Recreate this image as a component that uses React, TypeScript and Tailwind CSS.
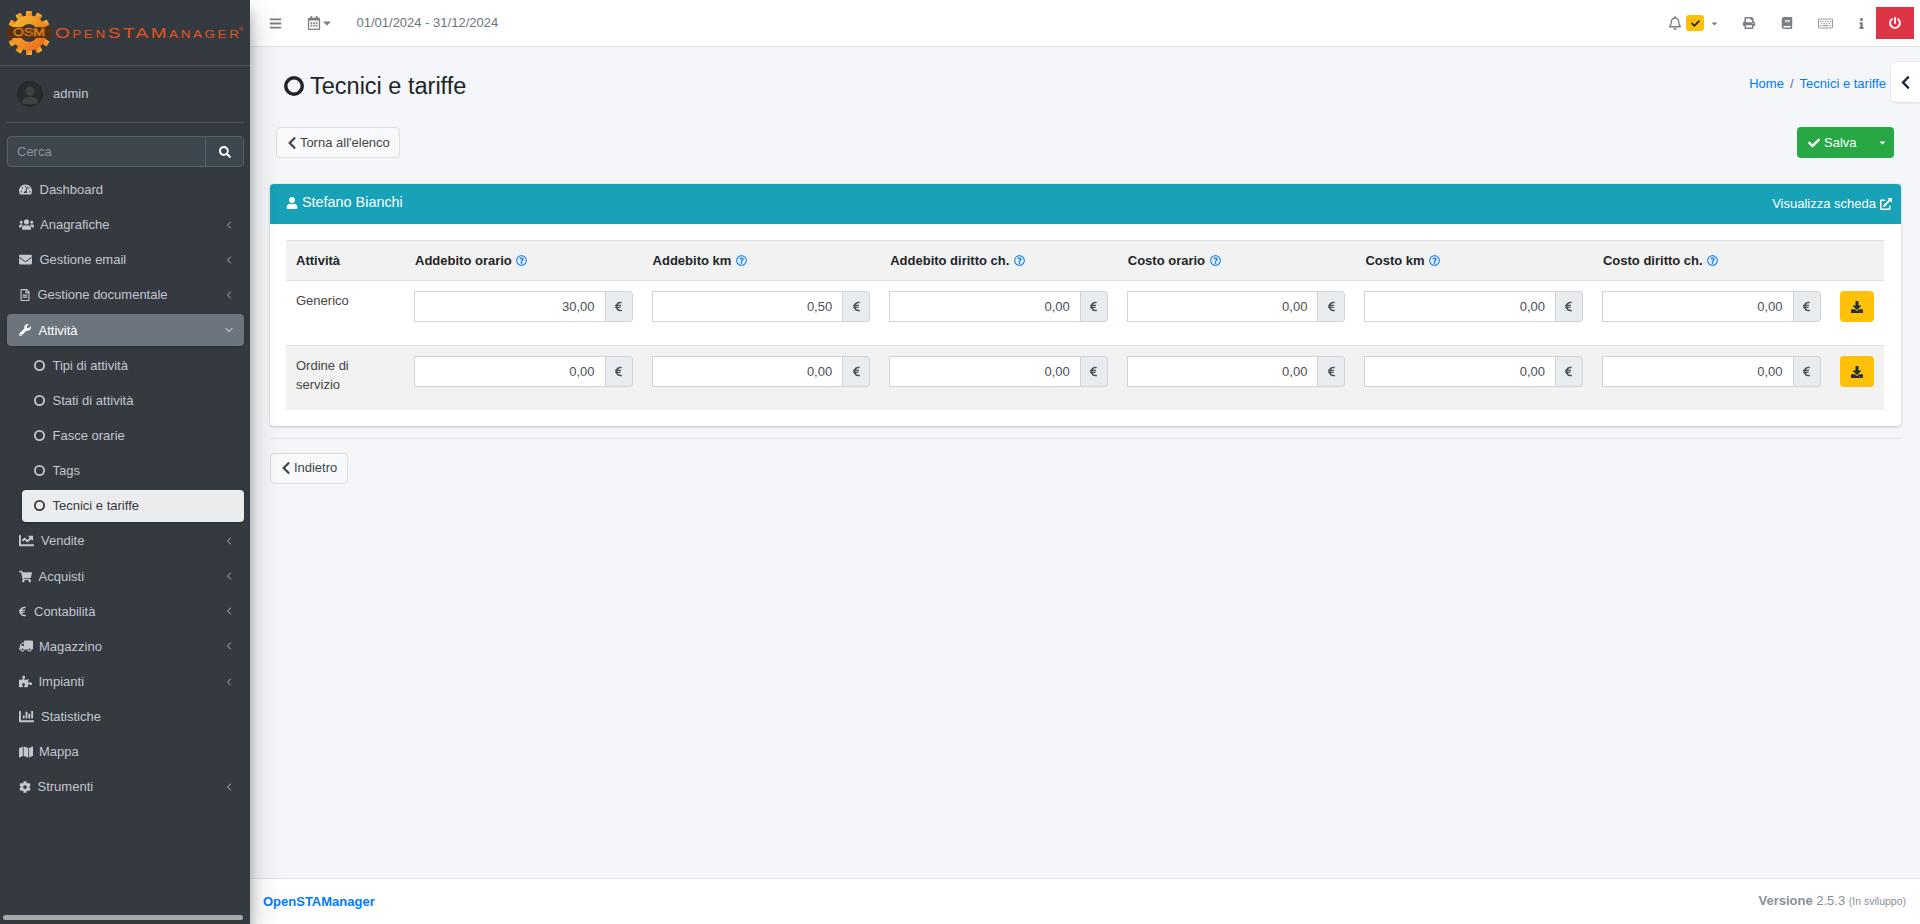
import React from "react";
import { ChevronLeft, ChevronDown } from "lucide-react";
import {
  FaTachometerAlt, FaUsers, FaEnvelope, FaRegFileAlt, FaWrench, FaChartLine, FaShoppingCart, FaEuroSign,
  FaTruck, FaPuzzlePiece, FaChartBar, FaMap, FaCog, FaSearch, FaBars,
  FaRegCalendarAlt, FaCaretDown, FaRegBell, FaCheck, FaPrint, FaBook, FaRegKeyboard, FaInfo, FaPowerOff,
  FaChevronLeft, FaUser, FaExternalLinkAlt, FaRegQuestionCircle, FaDownload,
} from "react-icons/fa";

const CircleO = ({ size, stroke }: { size: number; stroke: number }) => (
  <svg width={size} height={size} viewBox="0 0 24 24" fill="none" className="shrink-0">
    <circle cx="12" cy="12" r={12 - stroke / 2} stroke="currentColor" strokeWidth={stroke} />
  </svg>
);

const Logo = () => {
  const teeth = Array.from({ length: 12 }, (_, i) => i * 30);
  return (
    <div className="h-[66px] flex items-start border-b border-[#4b545c] relative">
      <svg width="46" height="46" viewBox="0 0 46 46" className="absolute left-[6px] top-[10px]">
        <defs>
          <linearGradient id="gear" x1="0" y1="0" x2="1" y2="1">
            <stop offset="0" stopColor="#f9c22e" />
            <stop offset="1" stopColor="#e8601c" />
          </linearGradient>
        </defs>
        <g fill="url(#gear)" transform="translate(23 23)">
          {teeth.map((a) => (
            <rect key={a} x="-3" y="-22" width="6" height="8" rx="1" transform={`rotate(${a})`} />
          ))}
          <path fillRule="evenodd" d="M0-17.5a17.5 17.5 0 1 0 0 35a17.5 17.5 0 1 0 0-35zM0-9a9 9 0 1 1 0 18a9 9 0 1 1 0-18z" />
        </g>
        <rect x="1" y="17" width="44" height="11" fill="#5b2e0e" />
        <text x="7" y="26.4" textLength="32" lengthAdjust="spacingAndGlyphs" fontFamily="Liberation Sans" fontSize="11" fill="none" stroke="#f39a26" strokeWidth="0.5">OSM</text>
      </svg>
      <span className="absolute left-[55px] top-[24px] text-[14px] leading-[18px] tracking-[1.9px] text-[#e4521f] whitespace-nowrap origin-left scale-x-[1.35] [font-variant:small-caps]">OpenSTAManager</span>
      <span className="absolute left-[239px] top-[25px] text-[6px] leading-[8px] text-[#e4521f]">®</span>
    </div>
  );
};

type Item = { label: string; icon: React.ReactNode; w: string; arrow?: boolean };

const menuTop: Item[] = [
  { label: "Dashboard", icon: <FaTachometerAlt size={13} />, w: "w-[20.5px]" },
  { label: "Anagrafiche", icon: <FaUsers size={15} />, w: "w-[21px]", arrow: true },
  { label: "Gestione email", icon: <FaEnvelope size={13} />, w: "w-[20.5px]", arrow: true },
  { label: "Gestione documentale", icon: <FaRegFileAlt size={12} />, w: "w-[18.5px]", arrow: true },
];

const menuSub = ["Tipi di attività", "Stati di attività", "Fasce orarie", "Tags"];

const menuBottom: Item[] = [
  { label: "Vendite", icon: <FaChartLine size={15} />, w: "w-[22px]", arrow: true },
  { label: "Acquisti", icon: <FaShoppingCart size={13} />, w: "w-[19.5px]", arrow: true },
  { label: "Contabilità", icon: <FaEuroSign size={11} className="-ml-[2px]" />, w: "w-[15px]", arrow: true },
  { label: "Magazzino", icon: <FaTruck size={14} className="-scale-x-100" />, w: "w-[20px]", arrow: true },
  { label: "Impianti", icon: <FaPuzzlePiece size={13} />, w: "w-[19.5px]", arrow: true },
  { label: "Statistiche", icon: <FaChartBar size={15} />, w: "w-[22px]" },
  { label: "Mappa", icon: <FaMap size={14} />, w: "w-[20px]" },
  { label: "Strumenti", icon: <FaCog size={12} />, w: "w-[18.5px]", arrow: true },
];

const NavRow = ({ item }: { item: Item }) => (
  <a className="h-[32.15px] mb-[3px] pl-[12px] pr-[9px] flex items-center text-[#c2c7d0]">
    <span className={`${item.w} shrink-0 flex items-center`}>{item.icon}</span>
    <span className="flex-1">{item.label}</span>
    {item.arrow && <ChevronLeft size={12} strokeWidth={1.75} />}
  </a>
);

const Sidebar = () => (
  <aside className="w-[250px] shrink-0 bg-[#343a40] relative z-20 shadow-[0_14px_28px_rgba(0,0,0,0.25),0_10px_10px_rgba(0,0,0,0.22)] flex flex-col">
    <Logo />
    <div className="ml-[7px] mr-[6px] h-[56.5px] border-b border-[#4f5962] flex items-center pl-[10px]">
      <span className="w-[26px] h-[26px] rounded-full bg-[#272b30] border border-[#22262a] overflow-hidden relative shrink-0">
        <svg viewBox="0 0 26 26" className="w-full h-full">
          <circle cx="13" cy="10" r="5" fill="#3b4147" />
          <path d="M4 24c0-6 4-8 9-8s9 2 9 8z" fill="#3b4147" />
        </svg>
      </span>
      <span className="ml-[10px] text-[#c2c7d0]">admin</span>
    </div>
    <div className="ml-[7px] mr-[6px] mt-[13.5px] h-[31px] flex rounded-[4px] border border-[#56606a] bg-[#3f474e]">
      <span className="flex-1 pl-[9px] flex items-center text-[#8d949b]">Cerca</span>
      <span className="w-[38px] border-l border-[#56606a] flex items-center justify-center text-white">
        <FaSearch size={12} />
      </span>
    </div>
    <nav className="mt-[6.5px] pl-[7px] pr-[6px]">
      {menuTop.map((m) => <NavRow key={m.label} item={m} />)}
      <a className="h-[32.15px] mb-[3px] pl-[12px] pr-[9px] flex items-center rounded-[4px] bg-[#6c757d] text-white shadow-[0_1px_3px_rgba(0,0,0,0.2)]">
        <span className="w-[19.5px] shrink-0 flex items-center"><FaWrench size={12} /></span>
        <span className="flex-1">Attività</span>
        <ChevronDown size={12} strokeWidth={1.75} />
      </a>
      <div className="pl-[15px]">
        {menuSub.map((s) => (
          <a key={s} className="h-[32.15px] mb-[3px] pl-[12px] flex items-center gap-[7.5px] text-[#c2c7d0]">
            <CircleO size={11} stroke={4} />
            {s}
          </a>
        ))}
        <a className="h-[32.15px] mb-[3px] pl-[12px] flex items-center gap-[7.5px] rounded-[4px] bg-[#ebeced] text-[#343a40] shadow-[0_1px_3px_rgba(0,0,0,0.2)]">
          <CircleO size={11} stroke={4} />
          Tecnici e tariffe
        </a>
      </div>
      {menuBottom.map((m) => <NavRow key={m.label} item={m} />)}
    </nav>
    <div className="absolute left-[3px] bottom-[4px] w-[240px] h-[5px] rounded-full bg-[#a8a8a8]" />
  </aside>
);

const Navbar = () => (
  <header className="h-[47px] shrink-0 bg-white border-b border-[#dee2e6] flex items-center text-[#7a7f84]">
    <FaBars size={13} className="ml-[19px]" />
    <FaRegCalendarAlt size={14} className="ml-[24.5px]" />
    <FaCaretDown size={12} className="ml-[0.5px]" />
    <span className="ml-[23.5px] text-[#6c757d]">01/01/2024 - 31/12/2024</span>
    <div className="ml-auto flex items-center pr-[6px]">
      <FaRegBell size={14} />
      <span className="ml-[4px] w-[18px] h-[16px] rounded-[3px] bg-[#ffc107] flex items-center justify-center text-[#1f2d3d]">
        <FaCheck size={9} />
      </span>
      <FaCaretDown size={9} className="ml-[6px]" />
      <FaPrint size={12} className="ml-[23.5px]" />
      <FaBook size={12} className="ml-[26px]" />
      <FaRegKeyboard size={15} className="ml-[25px] text-[#9a9ea3]" />
      <FaInfo size={11} className="ml-[23px]" />
      <span className="ml-[9.5px] w-[38px] h-[32px] bg-[#dc3545] text-white flex items-center justify-center">
        <FaPowerOff size={12} />
      </span>
    </div>
  </header>
);

const costs = ["Addebito orario", "Addebito km", "Addebito diritto ch.", "Costo orario", "Costo km", "Costo diritto ch."];
const rows = [
  { name: "Generico", values: ["30,00", "0,50", "0,00", "0,00", "0,00", "0,00"], bg: "bg-white" },
  { name: "Ordine di servizio", values: ["0,00", "0,00", "0,00", "0,00", "0,00", "0,00"], bg: "bg-[#f2f2f2]" },
];

const MoneyInput = ({ value }: { value: string }) => (
  <div className="flex h-[31px] mb-[23px] mr-[-1px]">
    <div className="flex-1 bg-white border border-[#ced4da] text-right pr-[10px] leading-[29px] text-[#495057]">{value}</div>
    <div className="w-[27px] bg-[#e9ecef] border border-l-0 border-[#ced4da] rounded-r-[4px] flex items-center justify-center text-[#495057]">
      <FaEuroSign size={11} />
    </div>
  </div>
);

const RatesTable = () => (
  <table className="w-full table-fixed border-collapse">
    <thead>
      <tr className="bg-[#f2f2f2] border-y border-[#dee2e6] h-[40px]">
        <th className="w-[118px] px-[10px] text-left font-bold text-[#212529]">Attività</th>
        {costs.map((c) => (
          <th key={c} className="w-[237.6px] px-[11px] text-left font-bold text-[#212529]">
            {c} <FaRegQuestionCircle size={11} className="inline text-[#007bff] ml-[1px] mb-[1px]" />
          </th>
        ))}
        <th />
      </tr>
    </thead>
    <tbody>
      {rows.map((r, i) => (
        <tr key={r.name} className={`${r.bg} ${i > 0 ? "border-t border-[#dee2e6]" : ""}`}>
          <td className="px-[10px] pt-[10px] align-top text-[#444]">{r.name}</td>
          {r.values.map((v, j) => (
            <td key={j} className="px-[10px] pt-[10px] align-top">
              <MoneyInput value={v} />
            </td>
          ))}
          <td className="pl-[10px] pt-[10px] align-top">
            <span className="w-[34px] h-[31px] rounded-[4px] bg-[#ffc107] text-[#1f2d3d] flex items-center justify-center">
              <FaDownload size={12} />
            </span>
          </td>
        </tr>
      ))}
    </tbody>
  </table>
);

const BackButton = ({ label, className }: { label: string; className: string }) => (
  <button className={`h-[31px] pl-[8.4px] pr-[6px] flex items-center gap-[0.5px] whitespace-nowrap bg-[#f8f9fa] border border-[#ddd] rounded-[4px] text-[#444] ${className}`}>
    <FaChevronLeft size={14} />
    {label}
  </button>
);

export default function App() {
  return (
    <div className="flex h-screen w-screen overflow-hidden text-[13px] leading-[19.2px] font-['Liberation_Sans',Arial,sans-serif] text-[#212529]">
      <Sidebar />
      <div className="flex-1 min-w-0 flex flex-col">
        <Navbar />
        <main className="flex-1 bg-[#f4f6f9] pl-[20px] pr-[19px] relative">
          <div className="h-[80px] flex items-start justify-between pl-[14px] pr-[15px]">
            <h1 className="mt-[24.5px] flex items-center gap-[6px] text-[23.5px] leading-[28px] font-normal text-[#212529]">
              <CircleO size={20} stroke={4.2} />
              Tecnici e tariffe
            </h1>
            <nav className="mt-[26.5px] flex gap-[6px] text-[#6c757d]">
              <a className="text-[#007bff]">Home</a>
              <span>/</span>
              <a className="text-[#007bff]">Tecnici e tariffe</a>
            </nav>
          </div>

          <div className="flex justify-between pl-[6px] pr-[7px] mb-[26px]">
            <BackButton label="Torna all'elenco" className="w-[124px]" />
            <div className="h-[31px] w-[97px] rounded-[4px] bg-[#28a745] text-white flex items-center pl-[11px]">
              <FaCheck size={12} />
              <span className="ml-[4px]">Salva</span>
              <FaCaretDown size={9} className="ml-[21px]" />
            </div>
          </div>

          <section className="bg-white rounded-[4px] shadow-[0_0_1px_rgba(0,0,0,0.125),0_1px_3px_rgba(0,0,0,0.2)]">
            <div className="h-[40px] bg-[#17a2b8] rounded-t-[4px] text-white flex justify-between pl-[16px] pr-[9px]">
              <h3 className="mt-[9px] flex items-center gap-[4px] h-[20px] text-[14.4px] font-normal">
                <FaUser size={12} />
                Stefano Bianchi
              </h3>
              <a className="mt-[10px] h-[19px] flex items-center gap-[4px]">
                Visualizza scheda <FaExternalLinkAlt size={12} />
              </a>
            </div>
            <div className="pl-[16px] pr-[17px] pt-[16px] pb-[16px]">
              <RatesTable />
            </div>
          </section>

          <hr className="mt-[12px] border-t border-[#dee2e6]" />
          <BackButton label="Indietro" className="w-[78px] mt-[13.5px]" />

          <div className="absolute right-0 top-[15px] w-[29px] h-[40px] bg-white rounded-l-[4px] shadow-[0_0_1px_rgba(0,0,0,0.125),0_1px_3px_rgba(0,0,0,0.1)] flex items-center justify-center text-[#1f2d3d]">
            <FaChevronLeft size={15} />
          </div>
        </main>
        <footer className="h-[46px] shrink-0 bg-white border-t border-[#dee2e6] flex items-center justify-between pl-[13px] pr-[14px]">
          <a className="font-bold text-[#007bff]">OpenSTAManager</a>
          <span className="text-[#869099]">
            <b>Versione</b> 2.5.3 <small className="text-[10.5px]">(In sviluppo)</small>
          </span>
        </footer>
      </div>
    </div>
  );
}
